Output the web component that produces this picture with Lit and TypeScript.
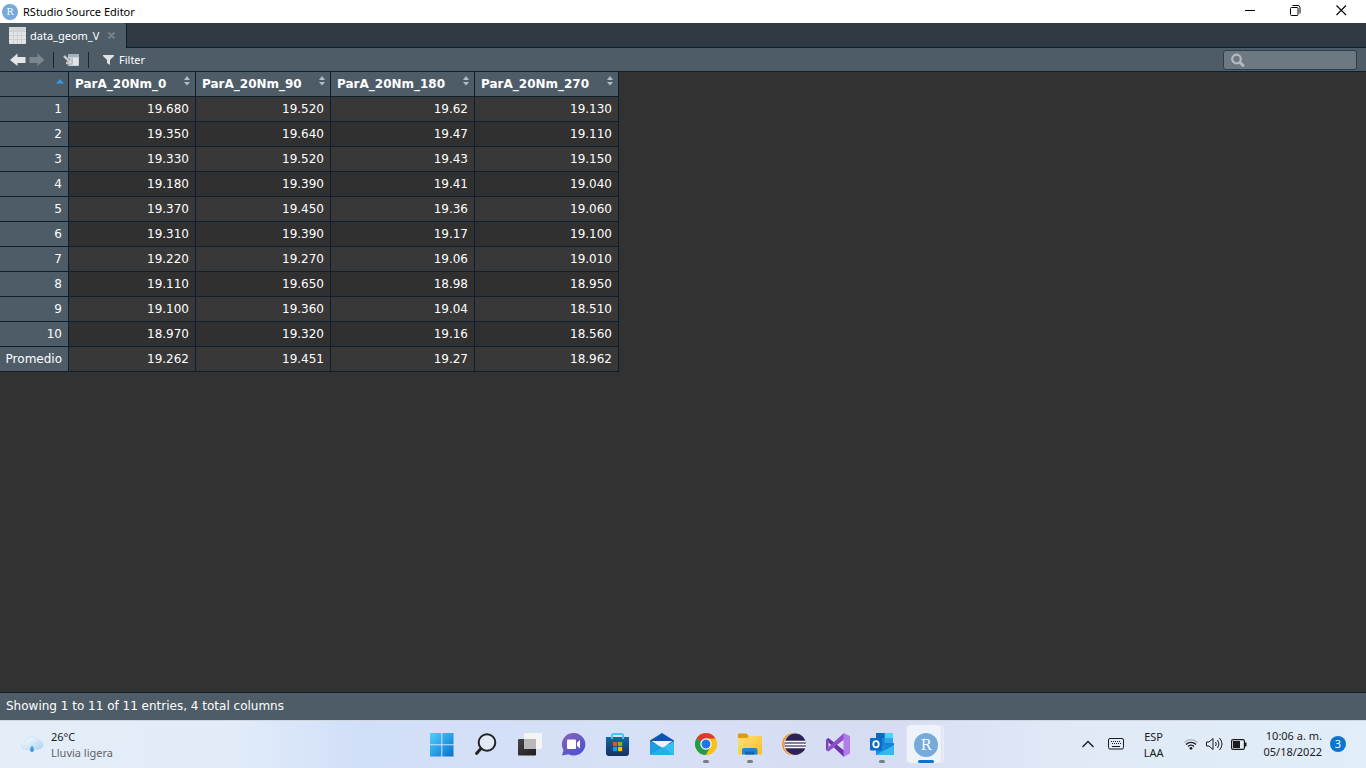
import { LitElement, html, svg, css } from "lit";
import { customElement, property } from "lit/decorators.js";

const COLUMNS = ["ParA_20Nm_0", "ParA_20Nm_90", "ParA_20Nm_180", "ParA_20Nm_270"];

const ROWS: [string, string[]][] = [
  ["1", ["19.680", "19.520", "19.62", "19.130"]],
  ["2", ["19.350", "19.640", "19.47", "19.110"]],
  ["3", ["19.330", "19.520", "19.43", "19.150"]],
  ["4", ["19.180", "19.390", "19.41", "19.040"]],
  ["5", ["19.370", "19.450", "19.36", "19.060"]],
  ["6", ["19.310", "19.390", "19.17", "19.100"]],
  ["7", ["19.220", "19.270", "19.06", "19.010"]],
  ["8", ["19.110", "19.650", "18.98", "18.950"]],
  ["9", ["19.100", "19.360", "19.04", "18.510"]],
  ["10", ["18.970", "19.320", "19.16", "18.560"]],
  ["Promedio", ["19.262", "19.451", "19.27", "18.962"]],
];

const reset = css`
  * {
    box-sizing: border-box;
  }
  button {
    appearance: none;
    border: 0;
    margin: 0;
    padding: 0;
    background: none;
    color: inherit;
    font: inherit;
    display: flex;
    align-items: center;
    justify-content: center;
  }
  svg {
    display: block;
    flex: none;
  }
`;

const rLogo = (size: number) => html`
  <svg width=${size} height=${size} viewBox="0 0 24 24" aria-hidden="true">
    <circle cx="12" cy="12" r="12" fill="#75aadb" />
    <text x="12" y="17" text-anchor="middle" font-family="DejaVu Serif, serif" font-size="14" fill="#fff">R</text>
  </svg>
`;

@customElement("window-title")
class WindowTitle extends LitElement {
  static styles = [
    reset,
    css`
      :host {
        display: flex;
        align-items: center;
        height: 23px;
        padding-left: 2px;
        background: #fff;
        color: #000;
        font: 11px/16px "Noto Sans", sans-serif;
      }
      .name {
        flex: 1;
        padding-left: 5px;
      }
      .control {
        width: 46px;
        height: 21px;
      }
      .controls {
        display: flex;
        align-self: flex-start;
        padding-right: 2px;
      }
    `,
  ];

  render() {
    return html`
      ${rLogo(16)}
      <span class="name">RStudio Source Editor</span>
      <div class="controls">
        <button class="control" aria-label="Minimizar">
          <svg width="11" height="11" viewBox="0 0 11 11"><path d="M1 5.500h10" stroke="#000" /></svg>
        </button>
        <button class="control" aria-label="Restaurar">
          <svg width="11" height="11" viewBox="0 0 11 11" fill="none" stroke="#000">
            <rect x=".5" y="2.500" width="7.500" height="8" rx="1" />
            <path d="M2.500.5h5.500q2 0 2 2v6" />
          </svg>
        </button>
        <button class="control" aria-label="Cerrar">
          <svg width="11" height="11" viewBox="0 0 11 11"><path d="M.5.5l9.500 9.500M10 .5L.5 10" stroke="#000" stroke-width="1.100" /></svg>
        </button>
      </div>
    `;
  }
}

@customElement("editor-bar")
class EditorBar extends LitElement {
  static styles = [
    reset,
    css`
      :host {
        display: block;
        color: #fff;
        font: 11px/16px "Noto Sans", sans-serif;
      }
      .tabs {
        display: flex;
        height: 25px;
        background: #2f3941;
        border-bottom: 1px solid #0c1f30;
      }
      .tab {
        display: flex;
        align-items: center;
        height: 25px;
        padding: 0 10px 0 9px;
        gap: 4px;
        background: #4e5c68;
        border-right: 1px solid #0c1f30;
        border-top-right-radius: 3px;
      }
      .tab-name {
        min-width: 73px;
      }
      .tools {
        display: flex;
        align-items: center;
        height: 24px;
        padding: 0 9px 0 10px;
        background: #4e5c68;
        border-bottom: 1px solid #0c1f30;
      }
      .back {
        padding-right: 3px;
      }
      .divider {
        width: 1px;
        height: 16px;
        margin: 0 9px 0 8px;
        background: #1d252c;
      }
      .filter {
        gap: 5px;
        padding-left: 5px;
      }
      .search {
        display: flex;
        align-items: center;
        width: 134px;
        height: 20px;
        margin-left: auto;
        padding: 2px 7px 0;
        border: 1px solid #2b3e50;
        border-radius: 3px;
        background: #6d7982;
      }
      .query {
        flex: 1;
        min-width: 0;
        height: 16px;
        border: 0;
        padding: 0 4px;
        outline: 0;
        background: none;
        color: #fff;
        font: inherit;
      }
    `,
  ];

  render() {
    return html`
      <div class="tabs">
        <div class="tab">
          <svg width="17" height="17" viewBox="0 0 17 17">
            <rect width="17" height="17" rx="1" fill="#e3e4e4" />
            <rect width="17" height="4" rx="1" fill="#d4d6d8" />
            <path d="M0 4.500h17M0 8.500h17M0 12.500h17M4.500 1v16M8.500 1v16M12.500 1v16" stroke="#cdd0d2" />
          </svg>
          <span class="tab-name">data_geom_V</span>
          <button aria-label="Cerrar data_geom_V">
            <svg width="9" height="9" viewBox="0 0 9 9"><path d="M1.500 1.500l6 6M7.500 1.500l-6 6" stroke="#76818a" stroke-width="2" /></svg>
          </button>
        </div>
      </div>
      <div class="tools">
        <button class="back" aria-label="Back">
          <svg width="16" height="13" viewBox="0 0 16 13"><path d="M0 7L7.500.5V4H15.500V10H7.500V13z" fill="#e4e5e6" /></svg>
        </button>
        <button aria-label="Forward">
          <svg width="16" height="13" viewBox="0 0 16 13"><path d="M15.500 7L8.500.5V4H.5V10H8.500V13z" fill="#7b868e" /></svg>
        </button>
        <span class="divider"></span>
        <button aria-label="Show in new window">
          <svg width="17" height="14" viewBox="0 0 17 14">
            <rect x="5" y="1" width="11" height="12" rx="1" fill="#c9d1d6" />
            <rect x="5" y="1" width="11" height="3" rx="1" fill="#9fb2bf" />
            <rect x="7" y="5" width="8" height="7" fill="#e3e4e5" />
            <path d="M1 3l6 6M8 5v5H3" fill="none" stroke="#8b979f" stroke-width="3" />
            <path d="M1 3l6 6M8 5v5H3" fill="none" stroke="#d5dade" stroke-width="1.600" />
          </svg>
        </button>
        <span class="divider"></span>
        <button class="filter">
          <svg width="11" height="10" viewBox="0 0 11 10"><path d="M0 0h11v1L7 5v5L4 8V5L0 1z" fill="#dfe1e3" /></svg>
          Filter
        </button>
        <label class="search">
          <svg width="15" height="15" viewBox="0 0 15 15" fill="none" stroke="#b3babf">
            <circle cx="5.500" cy="6" r="4.300" stroke-width="2.200" />
            <path d="M8.800 9.300l4 4" stroke-width="3" />
          </svg>
          <input class="query" type="text" aria-label="Search" />
        </label>
      </div>
    `;
  }
}

@customElement("data-grid")
class DataGrid extends LitElement {
  static styles = [
    reset,
    css`
      :host {
        display: block;
        flex: 1;
        min-height: 0;
        overflow: hidden;
        background: #323232;
        color: #fff;
        font: 12px/16px "DejaVu Sans", sans-serif;
      }
      .grid {
        table-layout: fixed;
        width: 619px;
        border-collapse: separate;
        border-spacing: 0;
      }
      .index-col {
        width: 69px;
      }
      .first-col {
        width: 127px;
      }
      .second-col {
        width: 135px;
      }
      .head,
      .index,
      .cell {
        height: 25px;
        padding: 0 6px 1px 4px;
        border-right: 1px solid #0c1f30;
        border-bottom: 1px solid #0c1f30;
        text-align: right;
        font-weight: 400;
        white-space: nowrap;
      }
      .head,
      .index {
        background: #4e5c68;
      }
      .head {
        padding: 0 4px 0 6px;
      }
      .sort {
        width: 100%;
        height: 22px;
        justify-content: space-between;
        align-items: flex-start;
        padding-top: 3px;
        font-weight: 700;
      }
      .sort.by-index {
        justify-content: flex-end;
      }
      .row:nth-child(odd) .cell {
        background: #383838;
      }
      .row:nth-child(even) .cell {
        background: #303030;
      }
    `,
  ];

  render() {
    return html`
      <table class="grid">
        <colgroup>
          <col class="index-col" />
          <col class="first-col" />
          <col class="second-col" />
          <col />
          <col />
        </colgroup>
        <thead>
          <tr>
            <th class="head" scope="col">
              <button class="sort by-index" aria-label="Sort by row">
                <svg width="8" height="9" viewBox="0 0 8 9"><path d="M0 7.500l4-4.500 4 4.500z" fill="#2e9bf0" /></svg>
              </button>
            </th>
            ${COLUMNS.map(
              (name) => html`
                <th class="head" scope="col">
                  <button class="sort">
                    ${name}
                    <svg width="8" height="10" viewBox="0 0 8 10">
                      <path d="M1 4l3-4 3 4zM1 6l3 3.500L7 6z" fill="#b6bdc2" />
                    </svg>
                  </button>
                </th>
              `
            )}
          </tr>
        </thead>
        <tbody>
          ${ROWS.map(
            ([label, values]) => html`
              <tr class="row">
                <th class="index" scope="row">${label}</th>
                ${values.map((value) => html`<td class="cell">${value}</td>`)}
              </tr>
            `
          )}
        </tbody>
      </table>
    `;
  }
}

interface TaskApp {
  name: string;
  icon: unknown;
  state?: "open" | "active";
}

const APPS: TaskApp[] = [
  {
    name: "Inicio",
    icon: svg`
      <defs><linearGradient id="win" x2="1" y2="1"><stop stop-color="#4fd0fb"/><stop offset="1" stop-color="#0571d0"/></linearGradient></defs>
      <path d="M0 0h11.300v11.300H0zM12.300 0H23.500v11.300H12.300zM0 12.300h11.300v11.200H0zM12.300 12.300H23.500v11.200H12.300z" fill="url(#win)"/>`,
  },
  {
    name: "Buscar",
    icon: svg`
      <circle cx="13" cy="9.500" r="8.300" fill="#e3e9f5" stroke="#242424" stroke-width="2"/>
      <path d="M7 15.500L2.500 20.500" stroke="#242424" stroke-width="3" stroke-linecap="round"/>`,
  },
  {
    name: "Vista de tareas",
    icon: svg`
      <defs><linearGradient id="dark" x2="1" y2="1"><stop stop-color="#454545"/><stop offset="1" stop-color="#1d1d1d"/></linearGradient></defs>
      <rect x="0" y="6" width="18" height="16.500" rx="1" fill="url(#dark)"/>
      <rect x="6" y="0" width="18" height="16" rx="1" fill="#f4f4f4"/>
      <path d="M6 6h12v10H6z" fill="#b9b9b9"/>`,
  },
  {
    name: "Chat",
    icon: svg`
      <defs><linearGradient id="chat" x2=".7" y2="1"><stop stop-color="#8a62b8"/><stop offset="1" stop-color="#4b53d0"/></linearGradient></defs>
      <path d="M12 0a11.500 11.300 0 1 1-5.500 21.300L0 22.500l1.500-5.500A11.500 11.300 0 0 1 12 0z" fill="url(#chat)"/>
      <rect x="5" y="6.500" width="9" height="9.500" rx="1" fill="#fff"/>
      <path d="M15 9.500l3-2.500v8.500l-3-2.500z" fill="#fff"/>`,
  },
  {
    name: "Microsoft Store",
    icon: svg`
      <defs><linearGradient id="bag" y2="1" x2="0"><stop stop-color="#1466ac"/><stop offset="1" stop-color="#17315c"/></linearGradient></defs>
      <path d="M0 4h23v16a3 3 0 0 1-3 3H3a3 3 0 0 1-3-3z" fill="url(#bag)"/>
      <path d="M6 6V2.500a1.500 1.500 0 0 1 1.500-1.500h8A1.500 1.500 0 0 1 17 2.500V6" fill="none" stroke="#43c6f4" stroke-width="2"/>
      <path d="M7 9h4.200v4.200H7z" fill="#f25022"/><path d="M12 9h4.200v4.200H12z" fill="#7fba00"/>
      <path d="M7 14h4.200v4.200H7z" fill="#00a4ef"/><path d="M12 14h4.200v4.200H12z" fill="#ffb900"/>`,
  },
  {
    name: "Correo",
    icon: svg`
      <path d="M0 7.500L12 0l12 7.500v4H0z" fill="#0c57a6"/>
      <path d="M1.500 8h21L12 15z" fill="#f1f3f6"/>
      <path d="M0 8l13 7L0 22z" fill="#1c9de3"/>
      <path d="M24 8v14H0z" fill="#36bdf0"/>
      <path d="M13 14.500L24 22H0z" fill="#27aeea"/>`,
  },
  {
    name: "Google Chrome",
    state: "open",
    icon: svg`
      <circle cx="12" cy="11" r="11" fill="#fbc116"/>
      <path d="M12 11L2.470 5.500A11 11 0 0 1 21.530 5.500H12z" fill="#db3a2f"/>
      <path d="M12 11L2.470 5.500A11 11 0 0 0 12 22L16.800 13.800z" fill="#259b4a"/>
      <path d="M12 6h9.800A11 11 0 0 1 12 22l4.600-8.500z" fill="#fbc116"/>
      <circle cx="12" cy="11" r="5.700" fill="#fff"/><circle cx="12" cy="11" r="4.500" fill="#2373e6"/>`,
  },
  {
    name: "Explorador de archivos",
    state: "open",
    icon: svg`
      <defs><linearGradient id="folder" x2="1" y2="1"><stop stop-color="#ffe07a"/><stop offset="1" stop-color="#fbbd27"/></linearGradient></defs>
      <path d="M0 1.500a1 1 0 0 1 1-1h7.500l2 2.500H23a1 1 0 0 1 1 1v5H0z" fill="#dd9b0c"/>
      <path d="M0 5h9l2-2h12a1 1 0 0 1 1 1v17.500H0z" fill="url(#folder)"/>
      <path d="M4 21.500V17a2 2 0 0 1 2-2h11.500a2 2 0 0 1 2 2v4.500z" fill="#1f86d6"/>
      <path d="M7 18.500h9.500v3H7z" fill="#0f66b5"/>`,
  },
  {
    name: "Eclipse",
    icon: svg`
      <circle cx="11" cy="11.300" r="11" fill="#f7941e"/>
      <circle cx="12.500" cy="11.300" r="10.800" fill="#f1d6b4"/>
      <circle cx="13.300" cy="11.300" r="10.700" fill="#2c2255"/>
      <path d="M2.800 8.500h21M2.600 11.500h21.400M2.800 14.500h21" stroke="#fff" stroke-width="1.700"/>
      <path d="M2.600 10h21.400M2.600 13h21.400" stroke="#a5a3bf"/>`,
  },
  {
    name: "Visual Studio",
    icon: svg`
      <path d="M0 6.200L2.500 5 18 17.500V24L2.500 9.500V8z" fill="#6b33aa"/>
      <path d="M0 17.300L2.500 18.500 18 6.500V0L2.500 14v1.500z" fill="#8b50ca"/>
      <path d="M0 6.200L2.500 8v7.500L0 17.300z" fill="#7a40b8"/>
      <path d="M17.500 0L24 3v17.500L17.500 24z" fill="#b27bee"/>`,
  },
  {
    name: "Outlook",
    state: "open",
    icon: svg`
      <rect x="6" y="0" width="17" height="15" rx="1" fill="#1583d6"/>
      <path d="M14.500 0H23v5h-8.500z" fill="#4fd0fa"/><path d="M14.500 5H23v5h-8.500z" fill="#28a8ea"/><path d="M6 0h8.500v5H6z" fill="#0b68bd"/>
      <path d="M6 13h9l9-3v12H6z" fill="#1490df"/><path d="M24 10v12L14 15.500z" fill="#1b7fd0"/><path d="M6 22l18-10v10z" fill="#35b8f1"/>
      <rect x="0" y="5" width="12" height="12.500" rx="1" fill="#0a6cc8"/>
      <ellipse cx="6" cy="11.200" rx="2.700" ry="3.100" fill="none" stroke="#fff" stroke-width="1.800"/>`,
  },
  { name: "RStudio", state: "active", icon: null },
];

@customElement("task-bar")
class TaskBar extends LitElement {
  static styles = [
    reset,
    css`
      :host {
        display: grid;
        grid-template-columns: 1fr auto 1fr;
        align-items: center;
        height: 48px;
        background: linear-gradient(90deg, #e4eef8 0, #e2ecf9 17%, #d1dff8 26%, #d6e0f6 45%, #d6ddf3 65%, #e0eaf7 78%, #e1edf9 100%);
        box-shadow: inset 0 1px #d0d7e2;
        color: #1b1b1b;
        font: 11px/16px "Noto Sans", sans-serif;
      }
      .weather {
        justify-self: start;
        margin-left: 21px;
        padding-top: 2px;
        gap: 7px;
        text-align: left;
      }
      .muted {
        color: #5d6369;
      }
      .apps {
        display: flex;
        padding-left: 1px;
      }
      .app {
        position: relative;
        width: 44px;
        height: 48px;
        padding-top: 1px;
      }
      .app.active::before {
        content: "";
        position: absolute;
        inset: 5px 7px 5px 3px;
        border-radius: 4px;
        background: #eef2fb;
        box-shadow: 0 0 0 1px #dde2ee, 3px 0 #e6ebf7;
      }
      .app.active .glyph {
        position: relative;
      }
      .app.open::after,
      .app.active::after {
        content: "";
        position: absolute;
        left: 19px;
        bottom: 5px;
        width: 6px;
        height: 3px;
        border-radius: 2px;
        background: #7b7d84;
      }
      .app.active::after {
        left: 14px;
        width: 16px;
        background: #0875d4;
      }
      .tray {
        justify-self: end;
        display: flex;
        align-items: center;
        padding-right: 20px;
      }
      .language {
        margin: 0 21px 0 20px;
        padding-top: 1px;
      }
      .status {
        gap: 8px;
      }
      .clock {
        margin: 0 8px 0 16px;
        text-align: right;
      }
      .keyboard {
        margin-left: 14px;
      }
      .badge {
        width: 16px;
        height: 16px;
        border-radius: 8px;
        background: #0a74d1;
        color: #fff;
      }
    `,
  ];

  @property({ attribute: false }) apps: TaskApp[] = APPS;

  render() {
    return html`
      <button class="weather">
        <svg width="23" height="20" viewBox="0 0 23 20">
          <defs><linearGradient id="cloud" x2="1" y2="1"><stop stop-color="#fff" /><stop offset="1" stop-color="#a9d3f2" /></linearGradient></defs>
          <path d="M5 14.500a4 4 0 0 1-.5-8A6.500 6.500 0 0 1 16.500 5a4.800 4.800 0 0 1 1.500 9.500z" fill="url(#cloud)" stroke="#c7dcec" stroke-width=".6" />
          <path d="M11 10.500q2 3 2 4.500a2 2 0 0 1-4 0q0-1.500 2-4.500z" fill="#3f94e4" />
        </svg>
        <span>26°C<br /><span class="muted">Lluvia ligera</span></span>
      </button>
      <nav class="apps" aria-label="Aplicaciones">
        ${this.apps.map(
          (app) => html`
            <button class="app ${app.state ?? ""}" aria-label=${app.name}>
              <span class="glyph">
                ${app.icon ? html`<svg width="24" height="24" viewBox="0 0 24 24">${app.icon}</svg>` : rLogo(24)}
              </span>
            </button>
          `
        )}
      </nav>
      <div class="tray">
        <button aria-label="Mostrar iconos ocultos">
          <svg width="12" height="8" viewBox="0 0 12 8"><path d="M.5 7L6 1.500 11.500 7" fill="none" stroke="#1b1b1b" stroke-width="1.400" /></svg>
        </button>
        <button class="keyboard" aria-label="Teclado">
          <svg width="16" height="12" viewBox="0 0 16 12" fill="none" stroke="#1b1b1b">
            <rect x=".5" y=".5" width="15" height="10.500" rx="1.500" />
            <path d="M3 3.500h10M4 5.500h9" stroke-dasharray="1 1" /><path d="M4 8.500h8" />
          </svg>
        </button>
        <button class="language"><span>ESP<br />LAA</span></button>
        <button class="status" aria-label="Red, volumen y batería">
          <svg width="14" height="12" viewBox="0 0 14 12" fill="none" stroke="#1b1b1b" stroke-width="1.200">
            <path d="M.5 4.500a9 9 0 0 1 13 0" stroke="#a9b2bb" />
            <path d="M2 6.500a7 7 0 0 1 10 0M4 8.500a4 4 0 0 1 6 0" />
            <circle cx="7" cy="10.300" r="1.400" fill="#1b1b1b" stroke="none" />
          </svg>
          <svg width="17" height="14" viewBox="0 0 17 14" fill="none" stroke="#1b1b1b">
            <path d="M.5 5v4H3l4 3.500v-11L3 5z" />
            <path d="M9.500 5q1.500 2 0 4M11.500 3q3 4 0 8M13.500 1q5 6 0 12" />
          </svg>
          <svg width="16" height="11" viewBox="0 0 16 11">
            <rect x=".6" y=".6" width="12.800" height="9.800" rx="1.500" fill="none" stroke="#1b1b1b" stroke-width="1.200" />
            <rect x="2" y="2" width="7" height="7" fill="#1b1b1b" /><path d="M14 3.500h1.500v4H14z" fill="#1b1b1b" />
          </svg>
        </button>
        <button class="clock">10:06 a. m.<br />05/18/2022</button>
        <button class="badge" aria-label="3 notificaciones">3</button>
      </div>
    `;
  }
}

@customElement("app-root")
class AppRoot extends LitElement {
  static styles = [
    reset,
    css`
      :host {
        display: flex;
        flex-direction: column;
        height: 100vh;
        overflow: hidden;
      }
      .summary {
        height: 28px;
        padding: 5px 6px 0;
        border-top: 1px solid #0c1f30;
        background: #4e5c68;
        color: #fff;
        font: 12px/16px "DejaVu Sans", sans-serif;
      }
    `,
  ];

  render() {
    return html`
      <window-title></window-title>
      <editor-bar></editor-bar>
      <data-grid></data-grid>
      <div class="summary">Showing 1 to 11 of 11 entries, 4 total columns</div>
      <task-bar></task-bar>
    `;
  }
}
